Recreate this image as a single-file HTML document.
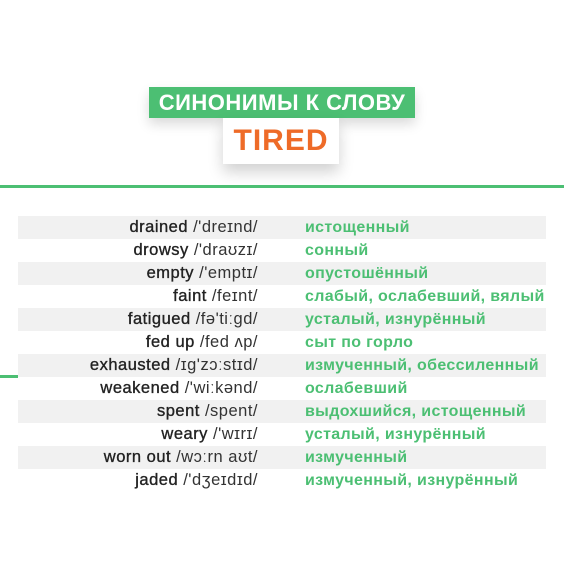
<!DOCTYPE html>
<html><head><meta charset="utf-8"><style>
body{margin:0;width:564px;height:564px;background:#fff;position:relative;overflow:hidden;font-family:"Liberation Sans","DejaVu Sans",sans-serif}
.t1{position:absolute;left:149px;top:87px;width:266px;height:31px;background:#4cbf73;color:#fff;font-weight:bold;font-size:22px;line-height:31px;text-align:center;letter-spacing:0.5px;box-shadow:0 6px 12px rgba(0,0,0,.15)}
.t2{position:absolute;left:223px;top:118px;width:116px;height:46px;background:#fff;color:#ee6b28;font-weight:bold;font-size:30px;line-height:46px;text-align:center;letter-spacing:1px;box-shadow:0 8px 14px rgba(0,0,0,.18)}
.line{position:absolute;left:0;top:185px;width:564px;height:3px;background:#4cbf73}
.sm{position:absolute;left:0;top:375px;width:18px;height:3px;background:#4cbf73}
.row{position:absolute;left:18px;width:528px;height:23px;line-height:23px;font-size:16.5px}
.g{background:#f1f1f1}
.l{position:absolute;right:288px;color:#333;white-space:nowrap;letter-spacing:0.5px}
.l b{font-weight:normal;color:#222;-webkit-text-stroke:0.35px #222}
.r{position:absolute;left:287px;color:#4cbf73;font-weight:bold;white-space:nowrap;font-size:16px;letter-spacing:0.35px}
</style></head><body>
<div class="t1">СИНОНИМЫ К СЛОВУ</div>
<div class="t2">TIRED</div>
<div class="line"></div>
<div class="sm"></div>
<div class="row g" style="top:216px"><span class="l"><b>drained</b> /'dreɪnd/</span><span class="r">истощенный</span></div>
<div class="row" style="top:239px"><span class="l"><b>drowsy</b> /'draʊzɪ/</span><span class="r">сонный</span></div>
<div class="row g" style="top:262px"><span class="l"><b>empty</b> /'emptɪ/</span><span class="r">опустошённый</span></div>
<div class="row" style="top:285px"><span class="l"><b>faint</b> /feɪnt/</span><span class="r">слабый, ослабевший, вялый</span></div>
<div class="row g" style="top:308px"><span class="l"><b>fatigued</b> /fə'tiːgd/</span><span class="r">усталый, изнурённый</span></div>
<div class="row" style="top:331px"><span class="l"><b>fed up</b> /fed ʌp/</span><span class="r">сыт по горло</span></div>
<div class="row g" style="top:354px"><span class="l"><b>exhausted</b> /ɪg'zɔːstɪd/</span><span class="r">измученный, обессиленный</span></div>
<div class="row" style="top:377px"><span class="l"><b>weakened</b> /'wiːkənd/</span><span class="r">ослабевший</span></div>
<div class="row g" style="top:400px"><span class="l"><b>spent</b> /spent/</span><span class="r">выдохшийся, истощенный</span></div>
<div class="row" style="top:423px"><span class="l"><b>weary</b> /'wɪrɪ/</span><span class="r">усталый, изнурённый</span></div>
<div class="row g" style="top:446px"><span class="l"><b>worn out</b> /wɔːrn aʊt/</span><span class="r">измученный</span></div>
<div class="row" style="top:469px"><span class="l"><b>jaded</b> /'dʒeɪdɪd/</span><span class="r">измученный, изнурённый</span></div>
</body></html>
